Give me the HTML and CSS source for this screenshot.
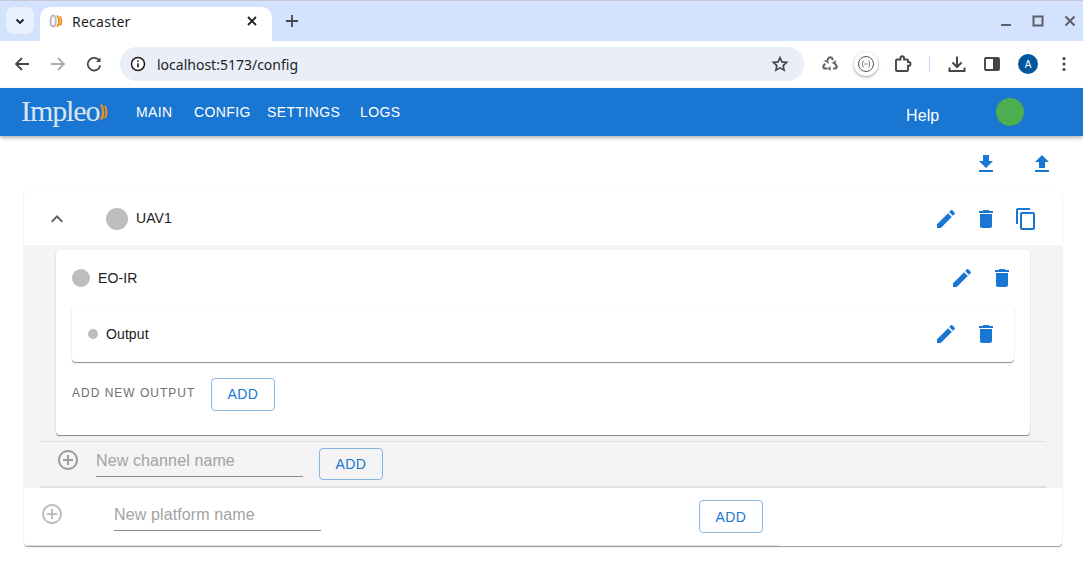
FILE: index.html
```html
<!DOCTYPE html>
<html lang="en">
<head>
    <meta charset="UTF-8">
    <title>Recaster</title>
    <link rel="stylesheet" href="styles.css">
</head>
<body>
    <svg class="sprite" width="0" height="0">
        <symbol id="i-edit" viewBox="0 0 24 24"><path d="M3 17.25V21h3.75L17.81 9.94l-3.75-3.75L3 17.25zM20.71 7.04c.39-.39.39-1.02 0-1.41l-2.34-2.34a.9959.9959 0 0 0-1.41 0l-1.83 1.83 3.75 3.75 1.83-1.83z"/></symbol>
        <symbol id="i-delete" viewBox="0 0 24 24"><path d="M6 19c0 1.1.9 2 2 2h8c1.1 0 2-.9 2-2V7H6v12zM19 4h-3.5l-1-1h-5l-1 1H5v2h14V4z"/></symbol>
        <symbol id="i-copy" viewBox="0 0 24 24"><path d="M16 1H4c-1.1 0-2 .9-2 2v14h2V3h12V1zm3 4H8c-1.1 0-2 .9-2 2v14c0 1.1.9 2 2 2h11c1.1 0 2-.9 2-2V7c0-1.1-.9-2-2-2zm0 16H8V7h11v14z"/></symbol>
        <symbol id="i-plus" viewBox="0 0 24 24"><path d="M13 7h-2v4H7v2h4v4h2v-4h4v-2h-4V7zm-1-5C6.48 2 2 6.48 2 12s4.48 10 10 10 10-4.48 10-10S17.52 2 12 2zm0 18c-4.41 0-8-3.59-8-8s3.59-8 8-8 8 3.59 8 8-3.59 8-8 8z"/></symbol>
    </svg>

    <div class="tabstrip">
        <div class="tab-search">
            <svg width="12" height="12" viewBox="0 0 12 12"><path d="M2.5 4.5 6 8l3.5-3.5" fill="none" stroke="#1f1f1f" stroke-width="1.8"/></svg>
        </div>
        <div class="tab">
            <svg class="favicon" width="16" height="16" viewBox="0 0 16 16">
                <path d="M5.500 2.500C1.500 2.500 1.500 13.500 5.500 13.500 8.500 13.500 8.500 2.500 5.500 2.500z" fill="none" stroke="#b5b5b5" stroke-width="1.800"/>
                <path d="M9 2.500c2.800 2.500 2.800 8.500 0 11" fill="none" stroke="#ee8c1c" stroke-width="2"/>
                <path d="M12 3.500c2 2.500 2 6.500 0 9" fill="none" stroke="#ee8c1c" stroke-width="1.800"/>
            </svg>
            <span class="tab-title">Recaster</span>
            <svg class="tab-close" width="10" height="10" viewBox="0 0 10 10"><path d="M1 1l8 8M9 1l-8 8" stroke="#1f1f1f" stroke-width="1.800"/></svg>
        </div>
        <svg class="new-tab" width="14" height="14" viewBox="0 0 14 14"><path d="M7 1v12M1 7h12" stroke="#444746" stroke-width="1.800"/></svg>
        <div class="window-controls">
            <svg width="12" height="12" viewBox="0 0 12 12"><path d="M1 10h10" stroke="#5b5e66" stroke-width="2"/></svg>
            <svg width="12" height="12" viewBox="0 0 12 12"><rect x="1.500" y="1.500" width="9" height="9" fill="none" stroke="#5b5e66" stroke-width="2"/></svg>
            <svg width="12" height="12" viewBox="0 0 12 12"><path d="M1.500 1.500l9 9M10.500 1.500l-9 9" stroke="#5b5e66" stroke-width="2"/></svg>
        </div>
    </div>

    <div class="toolbar">
        <svg class="tool-nav" width="24" height="24" viewBox="0 0 24 24"><path d="M19 12H6.500M12 6l-6 6 6 6" fill="none" stroke="#444746" stroke-width="1.800"/></svg>
        <svg class="tool-nav" width="24" height="24" viewBox="0 0 24 24"><path d="M5 12h12.500M12 6l6 6-6 6" fill="none" stroke="#a8abaf" stroke-width="1.800"/></svg>
        <svg class="tool-nav" width="24" height="24" viewBox="0 0 24 24"><path d="M17.500 9A6.300 6.300 0 1 0 18.200 13.500" fill="none" stroke="#444746" stroke-width="1.800"/><path d="M18.500 5.500V10H14z" fill="#444746"/></svg>
        <div class="omnibox">
            <svg class="omni-info" width="16" height="16" viewBox="0 0 16 16"><circle cx="8" cy="8" r="6.500" fill="#fff" stroke="#1f1f1f" stroke-width="1.500"/><path d="M8 7.200v4M8 4.500v1.500" stroke="#1f1f1f" stroke-width="1.600"/></svg>
            <span class="omni-url">localhost:5173/config</span>
            <svg class="omni-star" width="18" height="18" viewBox="0 0 24 24"><path d="M12 3.500l2.600 5.700 6.200.7-4.600 4.200 1.300 6.100L12 17.100l-5.500 3.100 1.300-6.100L3.200 9.900l6.200-.7z" fill="none" stroke="#444746" stroke-width="2.200"/></svg>
        </div>
        <div class="extensions">
            <svg class="ext" width="18" height="18" viewBox="0 0 18 18"><path d="M6.500 5 8 2.500h2.500L12 5M14 8.500l1.800 3-1 2H12M6.500 13.500H3.200l-1-2L4 8.500" fill="none" stroke="#666" stroke-width="2.200"/><path d="M9.500 11v5L6.500 13.500zM2.500 5.500l4.500-.5 1 4zM15 5l-.5 4.500-4-1.500z" fill="#666"/></svg>
            <div class="ext-circle"><svg width="20" height="20" viewBox="0 0 20 20"><circle cx="10" cy="10" r="7.500" fill="none" stroke="#555" stroke-width="1"/><path d="M7.500 7c-1.500 0-.5 3-1.500 3 1 0 0 3 1.500 3M12.500 7c1.500 0 .5 3 1.500 3-1 0 0 3-1.500 3M8.500 10h3" fill="none" stroke="#555" stroke-width=".9"/></svg></div>
            <svg class="ext" width="18" height="18" viewBox="0 0 18 18"><path d="M2 5.500a1 1 0 0 1 1-1h3.500V3a1.800 1.800 0 0 1 3.600 0v1.500H13a1 1 0 0 1 1 1V7h.6a1.900 1.900 0 0 1 0 3.800H14V15a1 1 0 0 1-1 1H3a1 1 0 0 1-1-1z" fill="none" stroke="#444746" stroke-width="1.900"/></svg>
            <span class="tool-sep"></span>
            <svg class="ext" width="20" height="20" viewBox="0 0 20 20"><path d="M10 2.500v10M5.500 8.500l4.500 4.500 4.500-4.500M2.500 13.500v3.500h15v-3.500" fill="none" stroke="#444746" stroke-width="2"/></svg>
            <svg class="ext" width="18" height="18" viewBox="0 0 18 18"><rect x="2" y="3" width="14" height="12" rx="1" fill="none" stroke="#444746" stroke-width="1.900"/><rect x="10" y="3" width="6" height="12" fill="#444746"/></svg>
            <span class="avatar">A</span>
            <svg class="ext" width="16" height="16" viewBox="0 0 16 16"><circle cx="8" cy="2.500" r="1.600" fill="#444746"/><circle cx="8" cy="8" r="1.600" fill="#444746"/><circle cx="8" cy="13.500" r="1.600" fill="#444746"/></svg>
        </div>
    </div>

    <header class="appbar">
        <div class="logo">
            <span class="logo-text">Impleo</span>
            <svg class="logo-arcs" width="9" height="18" viewBox="0 0 9 18"><path d="M1 1.500c3 4 3 11 0 15" fill="none" stroke="#ee8c1c" stroke-width="2.400"/><path d="M5 3c2 3 2 9 0 12" fill="none" stroke="#ee8c1c" stroke-width="2"/></svg>
        </div>
        <nav class="nav">
            <a class="nav-link">MAIN</a>
            <a class="nav-link">CONFIG</a>
            <a class="nav-link">SETTINGS</a>
            <a class="nav-link">LOGS</a>
        </nav>
        <span class="help">Help</span>
        <span class="status-dot"></span>
    </header>

    <main class="content">
        <div class="top-actions">
            <svg class="icon" viewBox="0 0 24 24"><path d="M19 9h-4V3H9v6H5l7 7 7-7zM5 18v2h14v-2H5z"/></svg>
            <svg class="icon" viewBox="0 0 24 24"><path d="M9 16h6v-6h4l-7-7-7 7h4zm-4 2h14v2H5z"/></svg>
        </div>

        <section class="platform">
            <div class="platform-head">
                <svg class="chevron" viewBox="0 0 24 24"><path d="M12 8l-6 6 1.410 1.410L12 10.830l4.590 4.580L18 14z"/></svg>
                <span class="dot dot-lg"></span>
                <span class="name name-top">UAV1</span>
                <div class="actions">
                    <svg class="icon"><use href="#i-edit"/></svg>
                    <svg class="icon"><use href="#i-delete"/></svg>
                    <svg class="icon"><use href="#i-copy"/></svg>
                </div>
            </div>

            <div class="platform-body">
                <div class="channel">
                    <div class="channel-head">
                        <span class="dot dot-md"></span>
                        <span class="name">EO-IR</span>
                        <div class="actions">
                            <svg class="icon"><use href="#i-edit"/></svg>
                            <svg class="icon"><use href="#i-delete"/></svg>
                        </div>
                    </div>
                    <div class="output">
                        <span class="dot dot-sm"></span>
                        <span class="name">Output</span>
                        <div class="actions">
                            <svg class="icon"><use href="#i-edit"/></svg>
                            <svg class="icon"><use href="#i-delete"/></svg>
                        </div>
                    </div>
                    <div class="add-output">
                        <span class="add-label">ADD NEW OUTPUT</span>
                        <button class="btn btn-output">ADD</button>
                    </div>
                </div>

                <div class="add-channel">
                    <svg class="plus plus-dark"><use href="#i-plus"/></svg>
                    <div class="field">New channel name</div>
                    <button class="btn">ADD</button>
                </div>
            </div>

            <div class="add-platform">
                <svg class="plus plus-light"><use href="#i-plus"/></svg>
                <div class="field">New platform name</div>
                <button class="btn">ADD</button>
            </div>
            <div class="platform-rule"></div>
        </section>
    </main>
</body>
</html>
```

FILE: styles.css
```css
* {
    box-sizing: border-box;
}
html, body {
    height: 100%;
}
body {
    margin: 0;
    overflow: hidden;
    background: #fff;
    font-family: "Liberation Sans", Arial, sans-serif;
    color: #212121;
}
.sprite {
    display: block;
    height: 0;
}

/* browser chrome */
.tabstrip {
    display: flex;
    align-items: flex-end;
    height: 41px;
    padding-left: 6px;
    background: #d3e3fd;
    border-top: 1px solid #c9c9d6;
}
.tab-search {
    display: flex;
    align-items: center;
    justify-content: center;
    align-self: flex-start;
    width: 28px;
    height: 27px;
    margin-top: 6px;
    background: #e8f0fe;
    border-radius: 8px;
}
.tab {
    display: flex;
    align-items: center;
    width: 232px;
    height: 34px;
    margin-left: 6px;
    padding: 0 15px 6px 8px;
    background: #fff;
    border-radius: 10px 10px 0 0;
}
.tab-title {
    flex: 1;
    margin-left: 8px;
    font: 14px "Noto Sans", sans-serif;
    letter-spacing: 0.25px;
    color: #1f1f1f;
}
.new-tab {
    align-self: flex-start;
    margin: 13px 0 0 13px;
}
.window-controls {
    display: flex;
    align-self: flex-start;
    gap: 20px;
    margin: 14px 7px 0 auto;
}
.toolbar {
    display: flex;
    align-items: center;
    height: 46px;
    padding-left: 10px;
    background: #fff;
}
.tool-nav {
    margin-right: 12px;
}
.omnibox {
    display: flex;
    align-items: center;
    width: 684px;
    height: 34px;
    margin-left: 2px;
    padding: 0 15px 0 10px;
    background: #e9eef8;
    border-radius: 17px;
}
.omni-url {
    flex: 1;
    margin-left: 11px;
    font: 14px "Noto Sans", sans-serif;
    color: #1f1f1f;
}
.extensions {
    display: flex;
    align-items: center;
    flex: 1;
    height: 100%;
}
.ext {
    flex: none;
}
.extensions > :nth-child(1) { margin-left: 17px; }
.extensions > :nth-child(3) { margin-left: 16px; }
.extensions > :nth-child(5) { margin-left: 17px; }
.extensions > :nth-child(6) { margin-left: 16px; }
.extensions > :nth-child(7) { margin-left: 17px; }
.extensions > :nth-child(8) { margin-left: 18px; }
.ext-circle {
    display: flex;
    align-items: center;
    justify-content: center;
    width: 24px;
    height: 24px;
    margin-left: 15px;
    background: #fff;
    border-radius: 50%;
    box-shadow: 0 1px 3px rgba(0, 0, 0, 0.4);
}
.tool-sep {
    width: 1px;
    height: 16px;
    margin-left: 17px;
    background: #c7d7f2;
}
.avatar {
    display: flex;
    align-items: center;
    justify-content: center;
    width: 20px;
    height: 20px;
    background: #00579d;
    border-radius: 50%;
    color: #fff;
    font-size: 10px;
}

/* app */
.appbar {
    display: flex;
    align-items: center;
    height: 48px;
    margin-top: 1px;
    padding-left: 21px;
    background: #1976d2;
    color: #fff;
    box-shadow: 0 2px 4px rgba(0, 0, 0, 0.3);
}
.logo {
    display: flex;
    align-items: center;
    width: 115px;
}
.logo-text {
    margin-bottom: 3px;
    font: 30px "Liberation Serif", serif;
    letter-spacing: -1.1px;
    color: #dde5f0;
}
.logo-arcs {
    margin-left: 1px;
}
.nav {
    display: grid;
    grid-template-columns: 58px 73px 93px auto;
    width: 770px;
    font-size: 14px;
    letter-spacing: 0.4px;
}
.help {
    margin-top: 7px;
    font-size: 16px;
    letter-spacing: 0.1px;
}
.status-dot {
    width: 28px;
    height: 28px;
    margin-left: 57px;
    background: #4caf50;
    border-radius: 50%;
}
.content {
    padding: 0 21px 0 24px;
}
.top-actions {
    display: flex;
    justify-content: flex-end;
    gap: 32px;
    height: 56px;
    padding: 16px 8px 0 0;
}
.icon {
    width: 24px;
    height: 24px;
    fill: #1976d2;
}
.platform {
    background: #fff;
    border-radius: 4px;
    box-shadow: 0 1px 1px rgba(0, 0, 0, 0.4), 0 0 2px rgba(0, 0, 0, 0.06);
}
.platform-head {
    display: flex;
    align-items: center;
    height: 53px;
    padding: 0 24px 0 21px;
}
.chevron {
    width: 24px;
    height: 24px;
    fill: #616161;
}
.dot {
    flex: none;
    background: #bdbdbd;
    border-radius: 50%;
}
.dot-lg {
    width: 22px;
    height: 22px;
    margin-left: 37px;
}
.dot-md {
    width: 18px;
    height: 18px;
}
.dot-sm {
    width: 10px;
    height: 10px;
}
.name {
    margin-left: 8px;
    font-size: 14px;
    letter-spacing: 0.1px;
}
.name-top {
    margin-bottom: 2px;
}
.actions {
    display: flex;
    gap: 16px;
    margin-left: auto;
}
.platform-body {
    padding: 5px 16px 0;
    background: #f4f4f4;
}
.channel {
    height: 185px;
    margin: 0 16px;
    padding: 0 16px;
    background: #fff;
    border-radius: 4px;
    box-shadow: 0 1px 1px rgba(0, 0, 0, 0.45), 0 0 2px rgba(0, 0, 0, 0.06);
}
.channel-head {
    display: flex;
    align-items: center;
    height: 56px;
}
.output {
    display: flex;
    align-items: center;
    height: 56px;
    padding: 0 16px;
    background: #fff;
    border-radius: 4px;
    box-shadow: 0 1px 1px rgba(0, 0, 0, 0.45), 0 0 2px rgba(0, 0, 0, 0.06);
}
.add-output {
    display: flex;
    align-items: flex-start;
    margin-top: 16px;
}
.add-label {
    width: 139px;
    margin-top: 8px;
    font-size: 12px;
    letter-spacing: 1px;
    color: #6f6f6f;
}
.btn {
    width: 64px;
    height: 33px;
    padding: 0;
    background: transparent;
    border: 1px solid rgba(25, 118, 210, 0.5);
    border-radius: 4px;
    color: #1976d2;
    font: 14px "Liberation Sans", sans-serif;
    letter-spacing: 0.4px;
}
.btn-output {
    padding-bottom: 2px;
}
.add-channel {
    display: flex;
    align-items: flex-start;
    height: 47px;
    margin-top: 6px;
    padding: 6px 0 0 16px;
    border-top: 1px solid #e0e0e0;
    border-bottom: 2px solid #e0e0e0;
}
.add-channel .btn {
    height: 32px;
    margin-left: 16px;
}
.plus {
    flex: none;
    width: 24px;
    height: 24px;
}
.plus-dark {
    fill: #9e9e9e;
}
.plus-light {
    fill: #bdbdbd;
}
.field {
    width: 207px;
    height: 29px;
    margin-left: 16px;
    border-bottom: 1px solid #8c8c8c;
    font-size: 16px;
    letter-spacing: 0.12px;
    line-height: 25px;
    color: #a2a2a2;
}
.add-platform {
    display: flex;
    align-items: flex-start;
    height: 57px;
    padding: 12px 0 0 16px;
}
.add-platform .plus {
    margin-top: 2px;
}
.add-platform .field {
    margin: 2px 0 0 50px;
}
.add-platform .btn {
    margin-left: 378px;
}
.platform-rule {
    width: 755px;
    height: 1px;
    background: #dcdcdc;
}
```
